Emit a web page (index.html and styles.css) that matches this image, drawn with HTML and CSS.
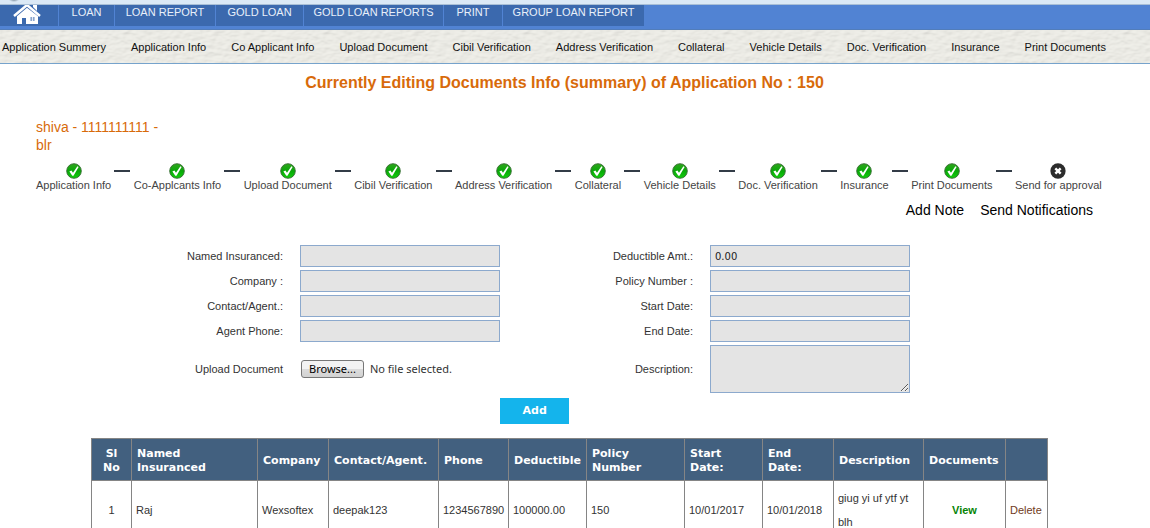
FILE: index.html
```html
<!DOCTYPE html>
<html lang="en">
<head>
<meta charset="utf-8">
<title>Documents Info</title>
<link rel="stylesheet" href="styles.css">
</head>
<body>
<svg class="defs" aria-hidden="true">
  <defs>
    <linearGradient id="green" x1="0" y1="0" x2="0" y2="1">
      <stop offset="0" stop-color="#2fa51d"/><stop offset=".5" stop-color="#08a808"/><stop offset="1" stop-color="#12cf0c"/>
    </linearGradient>
    <symbol id="ok" viewBox="0 0 16 16">
      <circle cx="8" cy="8" r="7.3" fill="url(#green)" stroke="#356b32" stroke-width=".9"/>
      <path d="M3.4 8.5 5.4 7.5 7 9.8 11.4 3.3 12.6 4 7.5 12.8 6.3 12.8Z" fill="#fff"/>
    </symbol>
    <symbol id="no" viewBox="0 0 18 18">
      <circle cx="9" cy="9" r="8.6" fill="#2c2c2c"/>
      <path d="M6 6 12 12M12 6 6 12" stroke="#fff" stroke-width="2.7"/>
    </symbol>
  </defs>
</svg>
<div class="strip"></div>
<nav class="menu">
  <a class="home" href="#" aria-label="Home">
    <svg viewBox="0 0 28 20" width="28" height="20">
      <path d="M20 0h4v6l-4-4z" fill="#fff"/>
      <path d="M14 0 1 11M14 0 27 11" stroke="#fff" stroke-width="2.5" fill="none"/>
      <path d="M14 2.7 4 11.2V19h5v-6h4v6h12v-7.800z" fill="#fff"/>
      <path d="M17 12h5v4h-5zM19.500 12v4M17 14h5" fill="#3b69ae" stroke="#fff" stroke-width=".8"/>
    </svg>
  </a>
  <a href="#">LOAN</a>
  <a href="#">LOAN REPORT</a>
  <a href="#">GOLD LOAN</a>
  <a href="#">GOLD LOAN REPORTS</a>
  <a href="#">PRINT</a>
  <a href="#">GROUP LOAN REPORT</a>
</nav>
<nav class="submenu">
  <a href="#">Application Summery</a>
  <a href="#">Application Info</a>
  <a href="#">Co Applicant Info</a>
  <a href="#">Upload Document</a>
  <a href="#">Cibil Verification</a>
  <a href="#">Address Verification</a>
  <a href="#">Collateral</a>
  <a href="#">Vehicle Details</a>
  <a href="#">Doc. Verification</a>
  <a href="#">Insurance</a>
  <a href="#">Print Documents</a>
</nav>
<main>
  <h1>Currently Editing Documents Info (summary) of Application No : 150</h1>
  <p class="customer">shiva - 1111111111 -<br>blr</p>
  <ol class="steps">
    <li><svg><use href="#ok"/></svg>Application Info</li>
    <li class="dash"></li>
    <li><svg><use href="#ok"/></svg>Co-Applcants Info</li>
    <li class="dash"></li>
    <li><svg><use href="#ok"/></svg>Upload Document</li>
    <li class="dash"></li>
    <li><svg><use href="#ok"/></svg>Cibil Verification</li>
    <li class="dash"></li>
    <li><svg><use href="#ok"/></svg>Address Verification</li>
    <li class="dash"></li>
    <li><svg><use href="#ok"/></svg>Collateral</li>
    <li class="dash"></li>
    <li><svg><use href="#ok"/></svg>Vehicle Details</li>
    <li class="dash"></li>
    <li><svg><use href="#ok"/></svg>Doc. Verification</li>
    <li class="dash"></li>
    <li><svg><use href="#ok"/></svg>Insurance</li>
    <li class="dash"></li>
    <li><svg><use href="#ok"/></svg>Print Documents</li>
    <li class="dash"></li>
    <li><svg class="big"><use href="#no"/></svg>Send for approval</li>
  </ol>
  <div class="actions"><a href="#">Add Note</a><a href="#">Send Notifications</a></div>
  <form>
    <div class="fields">
      <label for="named">Named Insuranced:</label><input id="named" type="text">
      <label for="deduct">Deductible Amt.:</label><input id="deduct" type="text" value="0.00">
      <label for="company">Company :</label><input id="company" type="text">
      <label for="policy">Policy Number :</label><input id="policy" type="text">
      <label for="contact">Contact/Agent.:</label><input id="contact" type="text">
      <label for="start">Start Date:</label><input id="start" type="text">
      <label for="phone">Agent Phone:</label><input id="phone" type="text">
      <label for="end">End Date:</label><input id="end" type="text">
      <label for="file">Upload Document</label>
      <div class="upload"><input id="file" class="hidden-file" type="file"><label class="browse" for="file">Browse...</label><span>No file selected.</span></div>
      <label for="desc">Description:</label><textarea id="desc"></textarea>
    </div>
    <button class="add" type="button">Add</button>
  </form>
  <table>
    <colgroup><col class="w40"><col class="w126"><col class="w71"><col class="w110"><col class="w70"><col class="w78"><col class="w98"><col class="w78"><col class="w71"><col class="w90"><col class="w82"><col class="w42"></colgroup>
    <thead>
      <tr><th class="mid">Sl<br>No</th><th>Named<br>Insuranced</th><th>Company</th><th>Contact/Agent.</th><th>Phone</th><th>Deductible</th><th>Policy<br>Number</th><th>Start<br>Date:</th><th>End<br>Date:</th><th>Description</th><th>Documents</th><th></th></tr>
    </thead>
    <tbody>
      <tr><td class="mid">1</td><td>Raj</td><td>Wexsoftex</td><td>deepak123</td><td>1234567890</td><td>100000.00</td><td>150</td><td>10/01/2017</td><td>10/01/2018</td><td class="desc">giug yi uf ytf yt<br>blh</td><td class="mid"><a class="view" href="#">View</a></td><td><a class="delete" href="#">Delete</a></td></tr>
    </tbody>
  </table>
</main>
</body>
</html>
```
FILE: styles.css
```css
* { box-sizing: border-box; }
html { overflow: hidden; }
body { margin: 0; background: #fff; color: #333; font: 11px/14px "Liberation Sans", Arial, sans-serif; }
a { color: inherit; text-decoration: none; }
.defs { position: absolute; width: 0; height: 0; }
.strip { height: 5px; background: radial-gradient(ellipse 5px 2px at 14px 0, #8798a8, transparent) #dbe9f6; border-bottom: 1px solid #a9bfd6; }
.menu { display: grid; grid-template-columns: 59px 56px 101px 88px 140px 59px 141px; height: 25px; padding-bottom: 3px; background: #5183d3; border-bottom: 1px solid #527dba; }
.menu a { display: flex; justify-content: center; background: #3b69ae; border-right: 1px solid #5183d3; color: #e9f0fa; }
.menu a:last-child { border-right: 0; }
.menu .home { padding-right: 4px; }
.submenu { display: flex; justify-content: space-between; align-items: center; height: 34px; padding: 0 44px 0 2px; color: #111; border-bottom: 1px solid #76a3cc; background: #e9e8e3 url("data:image/svg+xml,%3Csvg xmlns='http://www.w3.org/2000/svg' width='200' height='100'%3E%3Cfilter id='p' x='0' y='0' width='1' height='1'%3E%3CfeTurbulence type='fractalNoise' baseFrequency='.12 .24' numOctaves='2' stitchTiles='stitch'/%3E%3CfeDiffuseLighting lighting-color='%23f0efe9' surfaceScale='1' diffuseConstant='1.100'%3E%3CfeDistantLight azimuth='240' elevation='62'/%3E%3C/feDiffuseLighting%3E%3C/filter%3E%3Crect width='200' height='100' fill='%23e9e8e3'/%3E%3Crect width='200' height='100' opacity='.5' filter='url(%23p)'/%3E%3C/svg%3E"); }
h1 { margin: 0; padding: 9px 21px 0 0; text-align: center; font-size: 16px; line-height: 20px; color: #d86a0a; }
.customer { margin: 25px 0 0 36px; font-size: 14px; line-height: 18px; color: #d86a0a; }
.steps { display: flex; justify-content: space-between; margin: 9px 48px 0 36px; padding: 0; list-style: none; color: #444; }
.steps li { display: flex; flex-direction: column; align-items: center; line-height: 12px; }
.steps svg { width: 16px; height: 16px; }
.steps .big { width: 18px; height: 16px; overflow: visible; }
.steps .dash { width: 16px; height: 2px; margin-top: 7px; background: #333c47; }
.actions { display: flex; justify-content: flex-end; gap: 16px; margin-top: 9px; padding-right: 57px; font-size: 14px; line-height: 20px; color: #000; }
form { margin-top: 25px; }
.fields { display: grid; grid-template-columns: 283fr 217fr 193fr 217fr 240fr; row-gap: 3px; align-items: center; }
.fields > label { text-align: right; }
.fields > label:nth-child(4n + 1) { grid-column: 1; }
.fields input[type="text"], textarea { display: block; margin: 0 0 0 17px; height: 22px; padding: 2px 4px; border: 1px solid #8ca9cd; border-radius: 0; background: #e4e4e4; color: #222; font: 10px/14px "DejaVu Sans", Verdana, sans-serif; }
.fields textarea { height: 48px; }
.upload { display: flex; align-items: center; gap: 6px; margin-left: 18px; font: 11px/14px "Noto Sans", Tahoma, sans-serif; white-space: nowrap; }
.hidden-file { position: absolute; width: 1px; height: 1px; opacity: 0; }
.browse { padding: 1px 7px; border: 1px solid #777; border-radius: 3px; background: linear-gradient(#f3f3f3 50%, #dcdcdc 50%, #d2d2d2); color: #000; }
.add { display: block; width: 69px; height: 26px; margin: 5px 0 0 43.500%; padding: 0; border: 0; background: #14b4ec; color: #fff; font: bold 11px/14px "DejaVu Sans", Verdana, sans-serif; }
table { width: 83.100%; margin: 14px 0 0 91px; border-collapse: collapse; table-layout: fixed; }
th, td { padding: 0 5px; border: 1px solid #858585; text-align: left; white-space: nowrap; }
th { height: 42px; padding-top: 2px; background: #42607f; color: #fff; font: bold 11px/14px "DejaVu Sans", Verdana, sans-serif; }
td { height: 58px; padding: 0 4px; }
.mid { text-align: center; }
.desc { line-height: 24px; }
.view { color: #068406; font-weight: bold; }
.delete { color: #703a1a; }
.w40 { width: 40px; }
.w42 { width: 42px; }
.w70 { width: 70px; }
.w71 { width: 71px; }
.w78 { width: 78px; }
.w82 { width: 82px; }
.w90 { width: 90px; }
.w98 { width: 98px; }
.w110 { width: 110px; }
.w126 { width: 126px; }
```
